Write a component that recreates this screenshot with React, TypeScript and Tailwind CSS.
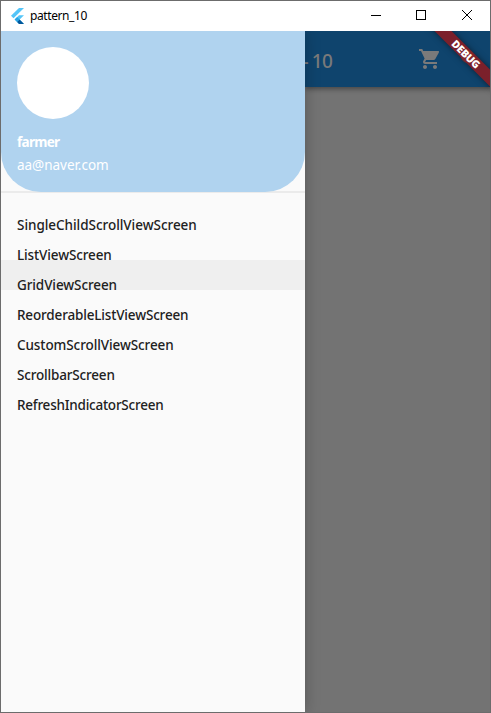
import { MdShoppingCart } from "react-icons/md";

const items = [
  { name: "SingleChildScrollViewScreen", spacing: "tracking-[-0.04px]" },
  { name: "ListViewScreen", spacing: "tracking-[-0.12px]" },
  { name: "GridViewScreen", spacing: "tracking-[-0.1px]" },
  { name: "ReorderableListViewScreen", spacing: "tracking-[-0.16px]" },
  { name: "CustomScrollViewScreen", spacing: "tracking-[-0.09px]" },
  { name: "ScrollbarScreen", spacing: "tracking-[-0.17px]" },
  { name: "RefreshIndicatorScreen", spacing: "tracking-[-0.23px]" },
];

function FlutterLogo() {
  return (
    <svg width="13" height="16" viewBox="0 0 13 16" className="shrink-0">
      <path d="M8 0h5L2.5 10.3 0 7.8z" fill="#54c5f8" />
      <path d="M8 7.3h5L8.6 11.6 13 16H8l-4.4-4.4z" fill="#54c5f8" />
      <path d="M3.6 11.6 6.1 9.1l2.5 2.5L6.1 14z" fill="#29a5e5" />
      <path d="M6.1 14 8.6 11.6 13 16H8z" fill="#01579b" />
    </svg>
  );
}

function TitleBar() {
  return (
    <div className="flex h-[30px] shrink-0 items-center bg-white">
      <div className="flex flex-1 items-center pl-[10px]">
        <FlutterLogo />
        <span className="ml-[6px] text-[12px] leading-4 tracking-[-0.4px] text-black">pattern_10</span>
      </div>
      <svg width="112" height="12" viewBox="0 0 112 12" className="mb-[2px] mr-[13px] shrink-0" fill="none" stroke="#000" strokeWidth="1">
        <path d="M6 6.5h10" shapeRendering="crispEdges" />
        <rect x="51.5" y="1.5" width="9" height="9" shapeRendering="crispEdges" />
        <path d="m97 1 10 10M107 1 97 11" />
      </svg>
    </div>
  );
}

function Drawer() {
  return (
    <div className="relative z-10 flex w-[304px] shrink-0 flex-col bg-[#fafafa] shadow-[0_0_14px_rgba(0,0,0,0.25)]">
      <div className="h-[162px] shrink-0 border-b-2 border-[#ebebeb]">
        <div className="flex h-[161px] flex-col rounded-b-[40px] bg-[#b0d3ef] px-4 pt-4 text-white">
          <div className="size-[72px] rounded-full bg-white" />
          <div className="mt-[13px] text-[13.5px] font-bold leading-5 tracking-[-0.7px]">farmer</div>
          <div className="mt-[3px] text-[13.5px] leading-5 tracking-[-0.03px]">aa@naver.com</div>
        </div>
      </div>
      <div className="relative pt-[17px]">
        <div className="absolute left-0 top-[67px] h-[30px] w-full bg-[#efefef]" />
        {items.map((item) => (
          <div key={item.name} className={`relative flex h-[30px] items-center px-4 text-[13.5px] font-medium leading-5 text-[#212121] ${item.spacing}`}>
            {item.name}
          </div>
        ))}
      </div>
    </div>
  );
}

export default function App() {
  return (
    <div className="relative flex h-[713px] w-[491px] flex-col overflow-hidden border border-[#6c6c6c] bg-[#737373] font-['Noto_Sans','Open_Sans',sans-serif]">
      <TitleBar />
      <div className="flex min-h-0 flex-1 overflow-hidden">
        <Drawer />
        <div className="relative flex-1 overflow-hidden">
          <div className="flex h-14 items-center bg-[#0f446d] text-[#7a7a7a] shadow-[0_2px_5px_rgba(0,0,0,0.4)]">
            <span className="-ml-[6px] mt-[4px] w-[33px] whitespace-nowrap text-right text-[19px] font-medium leading-6 tracking-[-0.8px]">- 10</span>
            <MdShoppingCart className="ml-[86px] size-6" />
          </div>
          <div className="absolute left-[110.5px] top-[17px] h-3 w-[100px] rotate-45 bg-[#7b202b] shadow-[0_0_6px_rgba(0,0,0,0.5)]" />
          <div className="absolute right-[16px] top-[19px] size-[13px] rounded-full bg-[#8a2c2a]/60" />
          <div className="absolute left-[110.5px] top-[17px] flex h-3 w-[100px] rotate-45 items-center justify-center text-[10.5px] font-black leading-3 tracking-[-0.3px] text-white">
            DEBUG
          </div>
        </div>
      </div>
      <div className="absolute -bottom-px -right-px h-px w-[69px] bg-[#1e1e1e]" />
      <div className="absolute -bottom-px -right-px h-[7px] w-px bg-[#1e1e1e]" />
    </div>
  );
}
